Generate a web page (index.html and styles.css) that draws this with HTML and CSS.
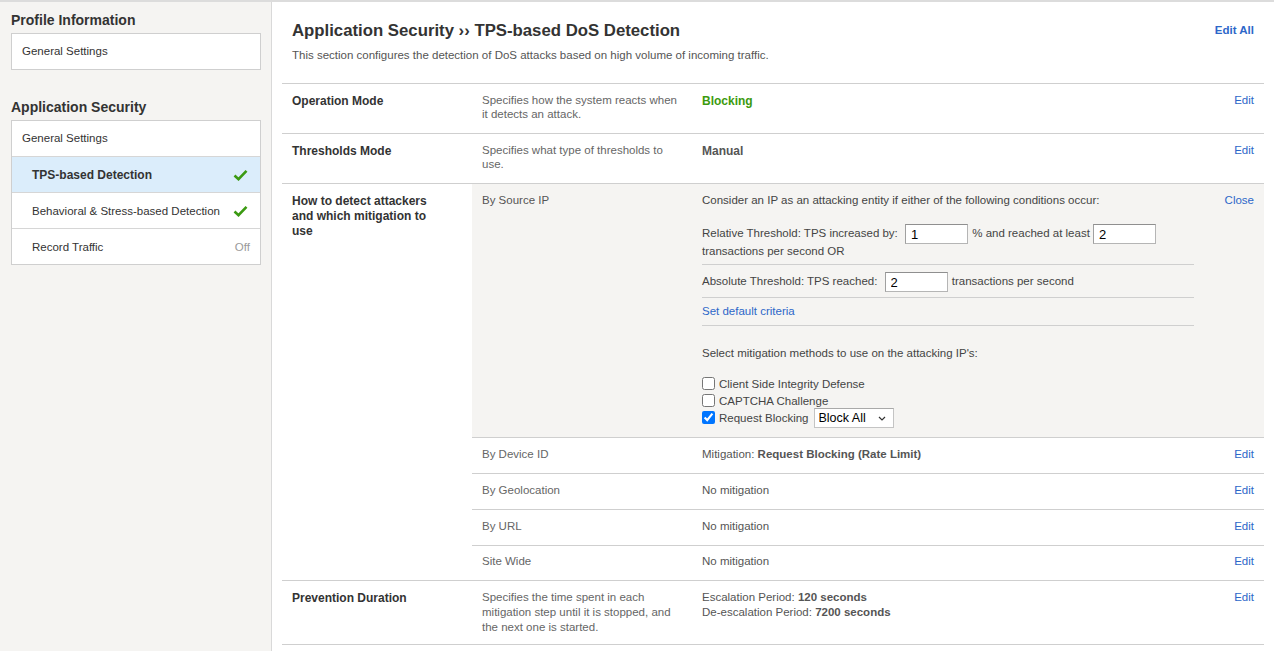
FILE: index.html
```html
<!DOCTYPE html>
<html>
<head>
<meta charset="utf-8">
<title>TPS-based DoS Detection</title>
<link rel="stylesheet" href="styles.css">
</head>
<body>
<div class="page">
  <aside class="sidebar">
    <h2 class="side-title">Profile Information</h2>
    <ul class="side-box">
      <li class="side-item top">General Settings</li>
    </ul>
    <h2 class="side-title second">Application Security</h2>
    <ul class="side-box">
      <li class="side-item top">General Settings</li>
      <li class="side-item sub active"><span>TPS-based Detection</span>
        <svg class="check" width="15" height="12" viewBox="0 0 15 12"><path d="M1.5 6.5 L5.5 10.2 L13.5 1.8" fill="none" stroke="#3b9a12" stroke-width="2.6"/></svg></li>
      <li class="side-item sub"><span>Behavioral &amp; Stress-based Detection</span>
        <svg class="check" width="15" height="12" viewBox="0 0 15 12"><path d="M1.5 6.5 L5.5 10.2 L13.5 1.8" fill="none" stroke="#3b9a12" stroke-width="2.6"/></svg></li>
      <li class="side-item sub"><span>Record Traffic</span><span class="off">Off</span></li>
    </ul>
  </aside>

  <main class="main">
    <header class="head">
      <div class="head-text">
        <h1 class="title">Application Security ›› TPS-based DoS Detection</h1>
        <p class="subtitle">This section configures the detection of DoS attacks based on high volume of incoming traffic.</p>
      </div>
      <a class="edit-all">Edit All</a>
    </header>

    <div class="table">
      <div class="row">
        <div class="label">Operation Mode</div>
        <div class="desc">Specifies how the system reacts when it detects an attack.</div>
        <div class="value green">Blocking</div>
        <div class="act"><a class="link">Edit</a></div>
      </div>
      <div class="row">
        <div class="label">Thresholds Mode</div>
        <div class="desc">Specifies what type of thresholds to use.</div>
        <div class="value strong">Manual</div>
        <div class="act"><a class="link">Edit</a></div>
      </div>
      <div class="row group">
        <div class="label narrow">How to detect attackers and which mitigation to use</div>
        <div class="subs">
          <div class="sub-row open">
            <div class="desc">By Source IP</div>
            <div class="value detail">
              <p class="d-intro">Consider an IP as an attacking entity if either of the following conditions occur:</p>
              <div class="d-block rel">
                <div class="d-line">Relative Threshold: TPS increased by: <input class="num first" type="text" value="1"> % and reached at least <input class="num second" type="text" value="2"></div>
                <div class="d-line2">transactions per second OR</div>
              </div>
              <div class="d-block abs">
                <div class="d-line">Absolute Threshold: TPS reached: <input class="num first" type="text" value="2"> transactions per second</div>
              </div>
              <div class="d-block def">
                <a class="link">Set default criteria</a>
              </div>
              <p class="d-select">Select mitigation methods to use on the attacking IP's:</p>
              <label class="cb"><input type="checkbox"><span class="cb-text">Client Side Integrity Defense</span></label>
              <label class="cb"><input type="checkbox"><span class="cb-text">CAPTCHA Challenge</span></label>
              <label class="cb"><input type="checkbox" checked><span class="cb-text">Request Blocking</span><span class="sel-wrap"><select class="sel"><option>Block All</option></select><svg class="chev" width="8" height="5" viewBox="0 0 8 5"><path d="M1 1 L4 4 L7 1" fill="none" stroke="#333" stroke-width="1.2"/></svg></span></label>
            </div>
            <div class="act"><a class="link">Close</a></div>
          </div>
          <div class="sub-row">
            <div class="desc">By Device ID</div>
            <div class="value">Mitigation: <b>Request Blocking (Rate Limit)</b></div>
            <div class="act"><a class="link">Edit</a></div>
          </div>
          <div class="sub-row">
            <div class="desc">By Geolocation</div>
            <div class="value">No mitigation</div>
            <div class="act"><a class="link">Edit</a></div>
          </div>
          <div class="sub-row">
            <div class="desc">By URL</div>
            <div class="value">No mitigation</div>
            <div class="act"><a class="link">Edit</a></div>
          </div>
          <div class="sub-row last">
            <div class="desc">Site Wide</div>
            <div class="value">No mitigation</div>
            <div class="act"><a class="link">Edit</a></div>
          </div>
        </div>
      </div>
      <div class="row tall">
        <div class="label">Prevention Duration</div>
        <div class="desc">Specifies the time spent in each mitigation step until it is stopped, and the next one is started.</div>
        <div class="value">Escalation Period: <b>120 seconds</b><br>De-escalation Period: <b>7200 seconds</b></div>
        <div class="act"><a class="link">Edit</a></div>
      </div>
    </div>
  </main>
</div>
</body>
</html>
```

FILE: styles.css
```css
* { box-sizing: border-box; }
html, body { margin: 0; padding: 0; }
body {
  font-family: "Liberation Sans", Arial, sans-serif;
  font-size: 11.5px;
  color: #555;
  background: #fff;
}
.page {
  display: flex;
  min-height: 651px;
  border-top: 2px solid #dcdcdc;
}
.sidebar {
  width: 272px;
  flex: none;
  background: #f5f4f2;
  border-right: 1px solid #d9d9d9;
  padding: 9px 10px 0 11px;
}
.side-title {
  margin: 0;
  font-size: 14px;
  line-height: 18px;
  font-weight: bold;
  color: #333;
}
.side-title.second { margin-top: 28px; }
.side-box {
  list-style: none;
  margin: 4px 0 0;
  padding: 0;
  background: #fff;
  border: 1px solid #cfcfcf;
}
.side-item {
  height: 36px;
  display: flex;
  align-items: center;
  justify-content: space-between;
  padding: 0 10px;
  color: #333;
  font-size: 11.5px;
  border-top: 1px solid #d6d6d6;
}
.side-item.top { border-top: none; height: 35px; padding-bottom: 2px; }
.side-item.sub { padding-left: 20px; }
.side-item.active { background: #dbedfb; font-weight: bold; font-size: 12px; }
.check { display: block; margin-right: 2px; }
.off { color: #9a9a9a; }

.main {
  flex: 1;
  padding: 0 10px;
}
.head {
  display: flex;
  justify-content: space-between;
  align-items: flex-start;
  padding: 19px 10px 21px 10px;
}
.title {
  margin: 0;
  font-size: 16.75px;
  line-height: 20px;
  font-weight: bold;
  color: #333;
}
.subtitle {
  margin: 7px 0 0;
  font-size: 11.5px;
  line-height: 14px;
  color: #555;
}
.edit-all {
  font-weight: bold;
  font-size: 11.5px;
  color: #2d67c9;
  line-height: 14px;
  margin-top: 2px;
}
.link { color: #2d67c9; cursor: pointer; }

.table { border-top: 1px solid #cfcfcf; }
.row {
  display: grid;
  grid-template-columns: 190px 220px 1fr 60px;
  border-bottom: 1px solid #cfcfcf;
}
.row.group { grid-template-columns: 190px 1fr; }
.label {
  padding: 10px 10px 11px;
  font-size: 12px;
  font-weight: bold;
  line-height: 15px;
  color: #333;
}
.label.narrow { padding-right: 38px; }
.desc, .value, .act {
  padding: 9px 10px 12px;
  line-height: 14px;
}
.desc { color: #666; }
.value { color: #555; }
.value b { color: #555; }
.act { text-align: right; }
.green { color: #3c9a0e; font-weight: bold; font-size: 12px; padding-top: 10px; padding-bottom: 11px; }
.strong { font-weight: bold; font-size: 12px; color: #555; padding-top: 10px; padding-bottom: 11px; }
.row.tall .value, .row.tall .desc { line-height: 15px; padding-bottom: 9px; }

.subs { display: flex; flex-direction: column; }
.sub-row {
  display: grid;
  grid-template-columns: 220px 1fr 60px;
  border-bottom: 1px solid #cfcfcf;
}
.sub-row.last { border-bottom: none; }
.sub-row.last .desc, .sub-row.last .value, .sub-row.last .act { padding-top: 8px; padding-bottom: 12px; }
.sub-row.open { background: #f5f4f2; }
.sub-row.open .desc { color: #555; }
.sub-row.open .value { padding-bottom: 11px; }

.detail { color: #444; }
.detail p { margin: 0; }
.d-intro { line-height: 14px; }
.d-block { border-bottom: 1px solid #cfcfcf; }
.rel { margin-top: 15px; padding-bottom: 6px; }
.d-line { line-height: 22px; height: 22px; }
.d-line2 { line-height: 14px; }
.abs { padding: 5px 0; }
.def { padding: 6px 0 7px; line-height: 14px; }
.num {
  width: 63px;
  height: 20px;
  border: 1px solid #b5b5b5;
  border-top-color: #8f8f8f;
  border-left-color: #a0a0a0;
  background: #fff;
  font-family: "Liberation Sans", Arial, sans-serif;
  font-size: 13px;
  padding: 1px 5px 0;
  vertical-align: middle;
  color: #000;
}
.num.first { margin: 0 1px 0 4px; }
.num.second { margin: 0; }
.d-select { margin-top: 20px !important; line-height: 14px; }
.cb {
  display: flex;
  align-items: center;
  height: 17px;
  color: #444;
}
.cb:first-of-type { margin-top: 15px; }
.cb input[type=checkbox] {
  margin: 0 4px 0 0;
  width: 13px;
  height: 13px;
}
.sel-wrap {
  position: relative;
  display: inline-block;
  margin-left: 5px;
  height: 20px;
}
.sel {
  appearance: none;
  -webkit-appearance: none;
  display: block;
  width: 80px;
  height: 20px;
  font-family: "Liberation Sans", Arial, sans-serif;
  font-size: 12.5px;
  background: #fff;
  border: 1px solid #c4c4c4;
  border-top-color: #a9a9a9;
  border-radius: 0;
  padding: 0 0 0 4px;
  color: #000;
}
.chev {
  position: absolute;
  right: 8px;
  top: 8px;
  pointer-events: none;
}
```
